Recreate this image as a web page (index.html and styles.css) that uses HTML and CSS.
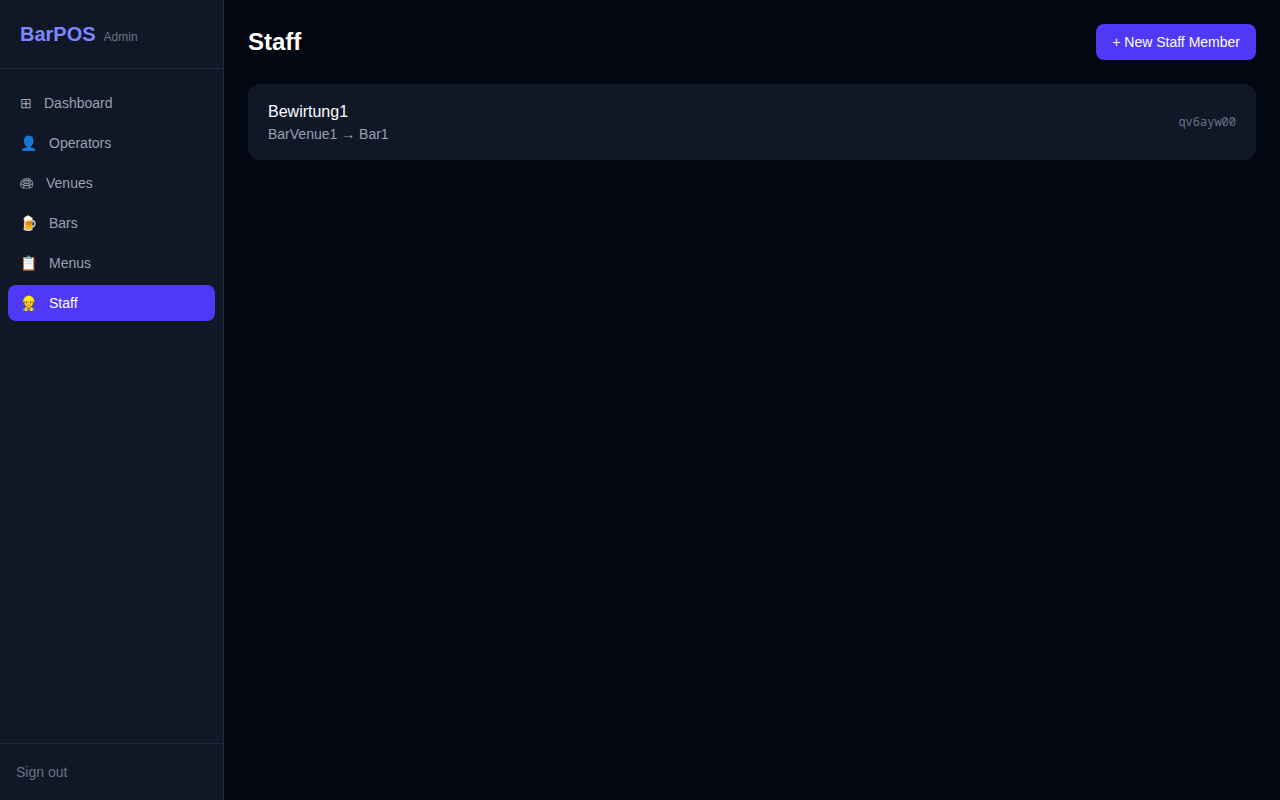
FILE: index.html
```html
<!DOCTYPE html>
<html lang="en">
<head>
  <meta charset="UTF-8">
  <meta name="viewport" content="width=device-width, initial-scale=1.0">
  <title>BarPOS Admin - Staff</title>
  <link rel="stylesheet" href="styles.css">
</head>
<body>
  <aside class="sidebar">
    <div class="brand">
      <span class="brand-name">BarPOS</span>
      <span class="brand-role">Admin</span>
    </div>
    <nav class="nav">
      <a href="#dashboard"><span>⊞</span>Dashboard</a>
      <a href="#operators"><span>👤</span>Operators</a>
      <a href="#venues">
        <svg class="icon-venue" viewBox="0 0 14 14" fill="none" stroke="currentColor" aria-hidden="true">
          <path d="M.8 7.4C.8 4.6 3.4 2.7 6.7 2.7s5.9 1.9 5.9 4.7v2.2c0 1.3-1.3 2.2-3 2.5V9.6H3.8v2.5c-1.7-.3-3-1.2-3-2.5z" stroke-width="1"/>
          <path d="M1 7.6c1.4 1.3 3.4 1.9 5.7 1.9s4.3-.6 5.7-1.9" stroke-width="1.2"/>
          <ellipse cx="6.7" cy="6" rx="3.8" ry="1.7" stroke-width=".9"/>
          <path d="M6.7 3v4.6M4.5 3.4l.6 4M8.9 3.4l-.6 4M2.4 4.6l1.2 1.2M11 4.6L9.8 5.8M3.8 12.1h5.8" stroke-width=".7"/>
        </svg>Venues
      </a>
      <a href="#bars"><span>🍺</span>Bars</a>
      <a href="#menus"><span>📋</span>Menus</a>
      <a href="#staff" class="active" aria-current="page"><span>👷</span>Staff</a>
    </nav>
    <div class="sidebar-footer">
      <button type="button" class="sign-out">Sign out</button>
    </div>
  </aside>

  <main>
    <header class="page-header">
      <h1>Staff</h1>
      <button type="button" class="btn-new">+ New Staff Member</button>
    </header>

    <div class="staff-list">
      <div class="staff-card">
        <div>
          <p class="staff-name">Bewirtung1</p>
          <p class="staff-place">BarVenue1 → Bar1</p>
        </div>
        <span class="staff-code">qv6ayw00</span>
      </div>
    </div>
  </main>
</body>
</html>
```

FILE: styles.css
```css
* { box-sizing: border-box; margin: 0; padding: 0; }
body { display: flex; min-height: 100vh; font-family: "Liberation Sans", sans-serif; font-size: 16px; line-height: 24px; background: #030712; color: #fff; }
button { font: inherit; border: none; cursor: pointer; }

.sidebar { display: flex; flex-direction: column; flex-shrink: 0; width: 224px; background: #101828; border-right: 1px solid #1e2939; }
.brand { display: flex; align-items: baseline; gap: 8px; padding: 20px; border-bottom: 1px solid #1e2939; }
.brand-name { font-size: 20px; line-height: 28px; font-weight: bold; color: #7c86ff; }
.brand-role { font-size: 12px; line-height: 16px; color: #6a7282; }

.nav { display: flex; flex-direction: column; flex: 1; gap: 4px; padding: 16px 8px; }
.nav a { display: flex; align-items: center; gap: 12px; padding: 8px 12px; border-radius: 8px; font-size: 14px; line-height: 20px; color: #99a1af; text-decoration: none; }
.nav a:hover { background: #1e2939; color: #fff; }
.nav a.active { background: #4f39f6; color: #fff; }
.icon-venue { width: 14px; height: 14px; }

.sidebar-footer { padding: 16px; border-top: 1px solid #1e2939; }
.sign-out { display: block; width: 100%; font-size: 14px; line-height: 24px; text-align: left; background: none; color: #6a7282; }
.sign-out:hover { color: #fff; }

main { flex: 1; padding: 24px; }
.page-header { display: flex; align-items: center; justify-content: space-between; margin-bottom: 24px; }
h1 { font-size: 24px; line-height: 32px; }
.btn-new { padding: 8px 16px; border-radius: 8px; font-size: 14px; line-height: 20px; background: #4f39f6; color: #fff; }
.btn-new:hover { background: #615fff; }

.staff-list { display: flex; flex-direction: column; gap: 12px; }
.staff-card { display: flex; align-items: center; justify-content: space-between; padding: 16px 20px; border-radius: 12px; background: #101828; }
.staff-place { font-size: 14px; line-height: 20px; color: #99a1af; }
.staff-code { font-family: "Noto Sans Mono", "Liberation Mono", monospace; font-size: 12px; line-height: 16px; color: #6a7282; }
```
